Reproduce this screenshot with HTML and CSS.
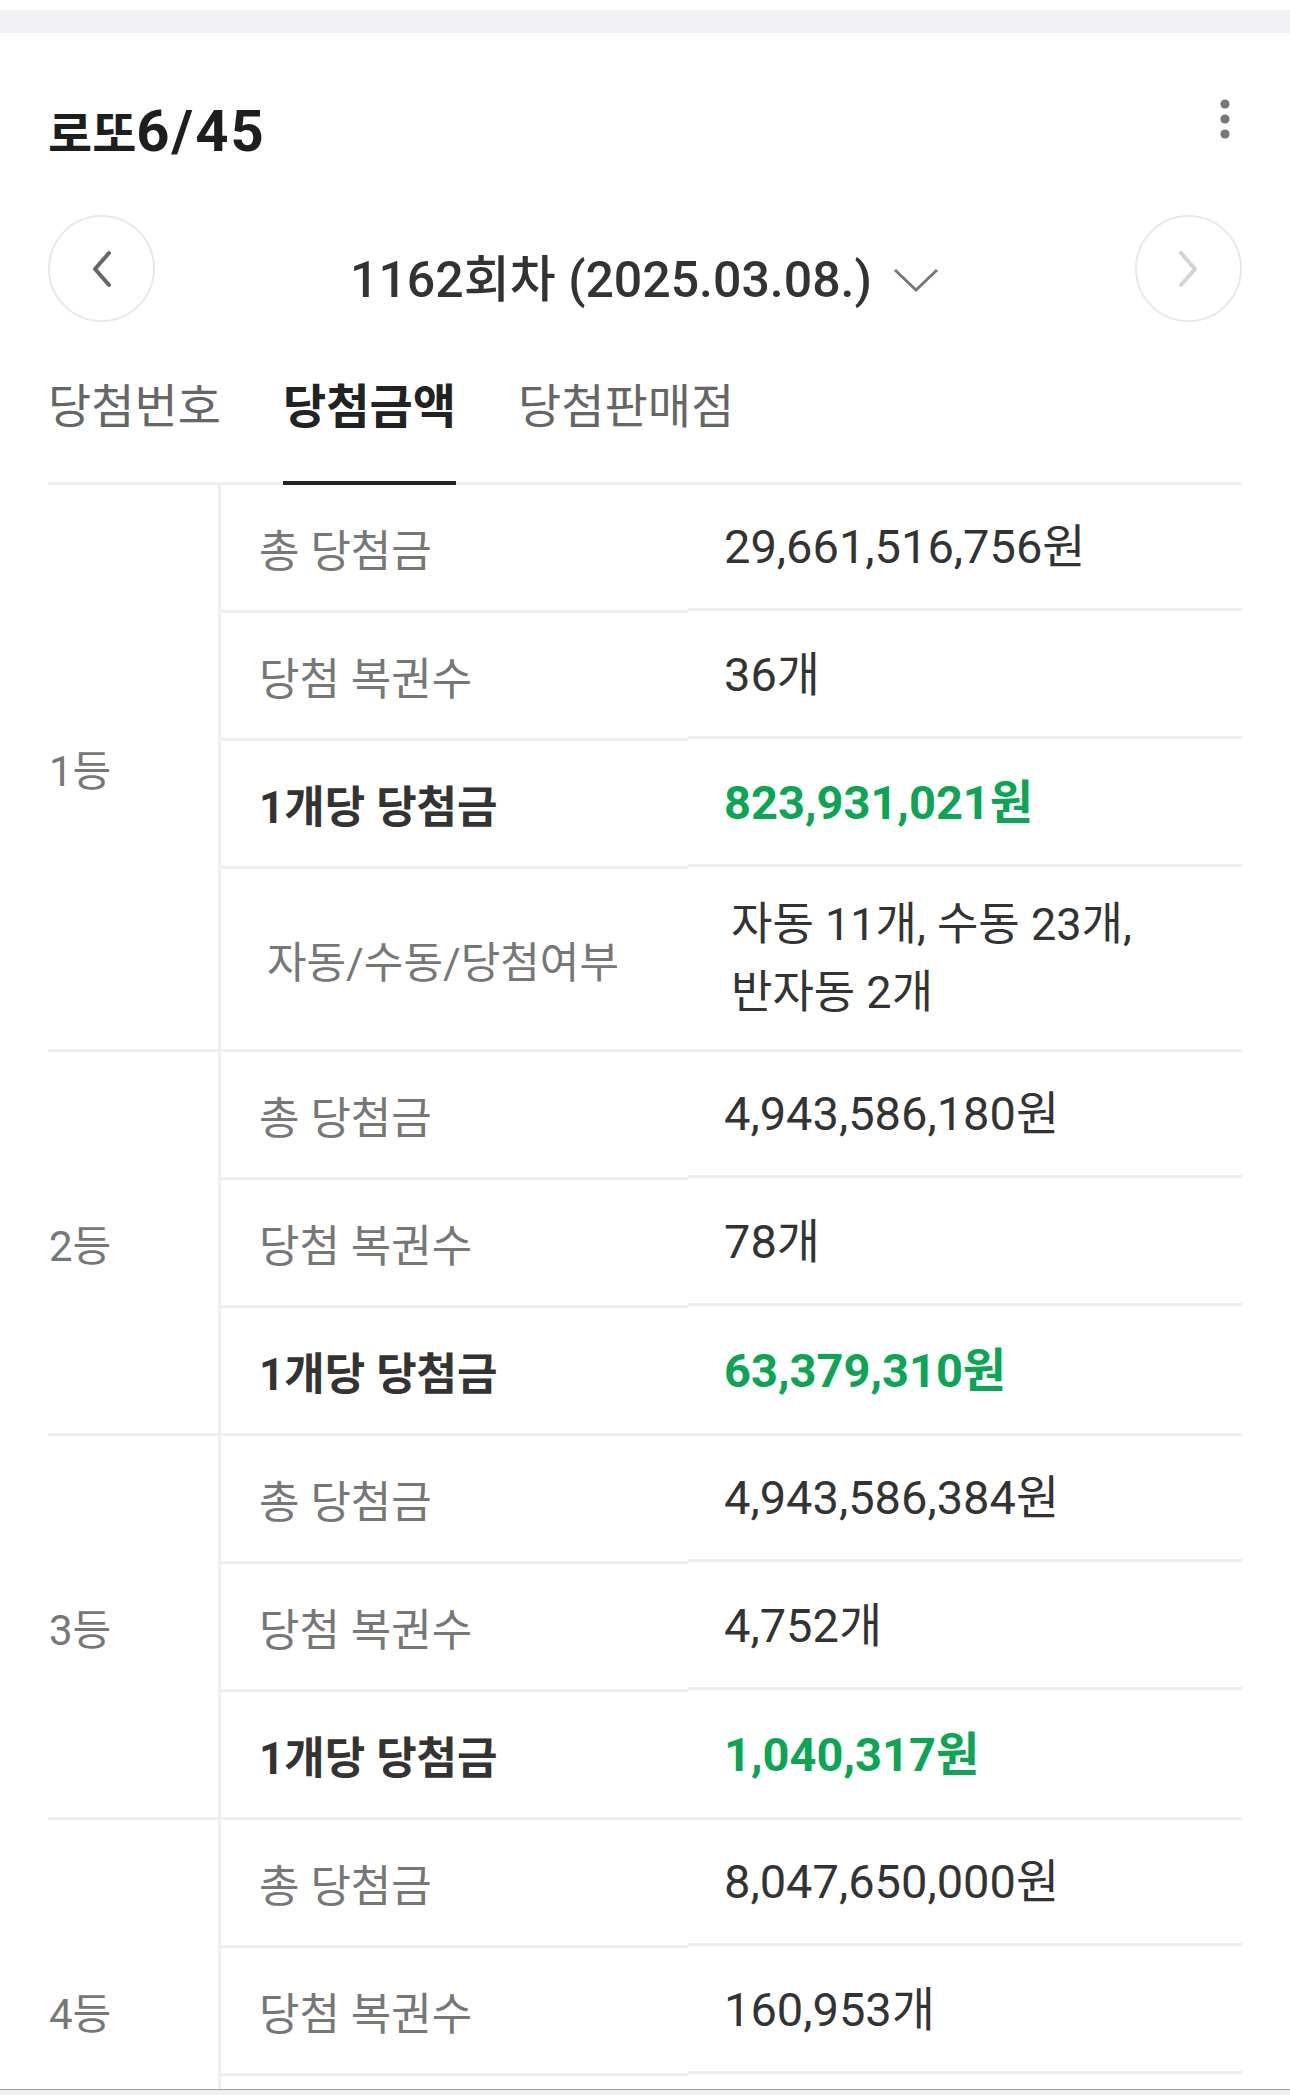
FILE: index.html
```html
<!DOCTYPE html>
<html lang="ko">
<head>
	<meta charset="UTF-8">
	<meta name="viewport" content="width=device-width, initial-scale=1.0">
	<title>로또6/45 당첨금액</title>
	<link rel="stylesheet" href="styles.css">
</head>
<body>
	<div class="top-gap"></div>

	<div class="card">
		<div class="card-head">
			<h1>로또<span class="game-no">6/45</span></h1>
			<button class="more" aria-label="더보기">
				<svg width="34" height="44" viewBox="0 0 34 44">
					<circle cx="17" cy="7" r="4.6" fill="#777"/>
					<circle cx="17" cy="22" r="4.6" fill="#777"/>
					<circle cx="17" cy="37" r="4.6" fill="#777"/>
				</svg>
			</button>
		</div>

		<div class="round-nav">
			<button class="round-btn" aria-label="이전 회차">
				<svg width="24" height="38" viewBox="0 0 24 38">
					<polyline points="19,3 5,19 19,35" fill="none" stroke="#666" stroke-width="4" stroke-linecap="round" stroke-linejoin="round"/>
				</svg>
			</button>
			<div class="draw-pick">
				<span class="draw-name">1162회차 (2025.03.08.)</span>
				<svg width="48" height="26" viewBox="0 0 48 26">
					<polyline points="3,3 24,23 45,3" fill="none" stroke="#777" stroke-width="3"/>
				</svg>
			</div>
			<button class="round-btn" aria-label="다음 회차">
				<svg width="24" height="38" viewBox="0 0 24 38">
					<polyline points="5,3 19,19 5,35" fill="none" stroke="#d4d4d4" stroke-width="4" stroke-linecap="round" stroke-linejoin="round"/>
				</svg>
			</button>
		</div>

		<div class="tabs">
			<div class="tab">당첨번호</div>
			<div class="tab on">당첨금액</div>
			<div class="tab">당첨판매점</div>
		</div>

		<div class="prize-table">
			<div class="rank-group">
				<div class="rank-name">1등</div>
				<div class="rank-rows">
					<div class="prize-row">
						<div class="prize-label">총 당첨금</div>
						<div class="prize-value">29,661,516,756원</div>
					</div>
					<div class="prize-row">
						<div class="prize-label">당첨 복권수</div>
						<div class="prize-value">36개</div>
					</div>
					<div class="prize-row">
						<div class="prize-label strong">1개당 당첨금</div>
						<div class="prize-value win">823,931,021원</div>
					</div>
					<div class="prize-row tall">
						<div class="prize-label">자동/수동/당첨여부</div>
						<div class="prize-value">자동 11개, 수동 23개,<br>반자동 2개</div>
					</div>
				</div>
			</div>

			<div class="rank-group">
				<div class="rank-name">2등</div>
				<div class="rank-rows">
					<div class="prize-row">
						<div class="prize-label">총 당첨금</div>
						<div class="prize-value">4,943,586,180원</div>
					</div>
					<div class="prize-row">
						<div class="prize-label">당첨 복권수</div>
						<div class="prize-value">78개</div>
					</div>
					<div class="prize-row">
						<div class="prize-label strong">1개당 당첨금</div>
						<div class="prize-value win">63,379,310원</div>
					</div>
				</div>
			</div>

			<div class="rank-group">
				<div class="rank-name">3등</div>
				<div class="rank-rows">
					<div class="prize-row">
						<div class="prize-label">총 당첨금</div>
						<div class="prize-value">4,943,586,384원</div>
					</div>
					<div class="prize-row">
						<div class="prize-label">당첨 복권수</div>
						<div class="prize-value">4,752개</div>
					</div>
					<div class="prize-row">
						<div class="prize-label strong">1개당 당첨금</div>
						<div class="prize-value win">1,040,317원</div>
					</div>
				</div>
			</div>

			<!-- 목록이 아래로 이어지는 그룹 -->
			<div class="rank-group open">
				<div class="rank-name">4등</div>
				<div class="rank-rows">
					<div class="prize-row">
						<div class="prize-label">총 당첨금</div>
						<div class="prize-value">8,047,650,000원</div>
					</div>
					<div class="prize-row">
						<div class="prize-label">당첨 복권수</div>
						<div class="prize-value">160,953개</div>
					</div>
				</div>
			</div>
		</div>
	</div>

	<div class="bottom-bar"></div>
</body>
</html>
```

FILE: styles.css
```css
html, body {
	height: 100%;
	overflow: hidden;
}
body {
	margin: 0;
	background: #fff;
	font-family: Roboto, "Noto Sans CJK KR", sans-serif;
	color: #333;
}
button {
	border: none;
	background: none;
	padding: 0;
	cursor: pointer;
	font: inherit;
}
.top-gap {
	margin-top: 10px;
	height: 23px;
	background: #f1f1f3;
}
.card {
	padding: 0 48px;
}

/* 제목 + 더보기 */
.card-head {
	display: flex;
	justify-content: space-between;
	align-items: flex-start;
	height: 58px;
	margin-top: 69px;
}
.card-head h1 {
	margin: 0;
	font-size: 48px;
	line-height: 58px;
	font-weight: bold;
	color: #1e1e1e;
}
.game-no {
	font-size: 58px;
	letter-spacing: 2px;
}
.more {
	display: flex;
	margin-top: -5px;
}

/* 회차 선택 */
.round-nav {
	display: flex;
	justify-content: space-between;
	align-items: center;
	margin-top: 55px;
}
.round-btn {
	width: 107px;
	height: 107px;
	box-sizing: border-box;
	border: 2px solid #e8e8e8;
	border-radius: 50%;
	display: flex;
	align-items: center;
	justify-content: center;
}
.draw-pick {
	display: flex;
	align-items: center;
	gap: 20px;
	padding-top: 22px;
}
.draw-name {
	font-size: 50px;
	line-height: 60px;
	font-weight: 500;
	color: #333;
}

/* 탭 */
.tabs {
	display: flex;
	gap: 62px;
	margin-top: 59px;
	border-bottom: 3px solid #efefef;
}
.tab {
	font-size: 47px;
	line-height: 52px;
	padding-bottom: 48px;
	color: #666;
}
.tab.on {
	color: #222;
	font-weight: bold;
	border-bottom: 4px solid #222;
	margin-bottom: -3px;
}

/* 당첨금 표 */
.rank-group {
	display: flex;
	border-bottom: 3px solid #efefef;
}
.rank-group.open {
	border-bottom: none;
}
.rank-name {
	width: 169px;
	padding-left: 1px;
	display: flex;
	align-items: center;
	border-right: 3px solid #efefef;
	font-size: 42px;
	color: #777;
}
.rank-rows {
	flex: 1;
	display: flex;
	flex-direction: column;
}
/* 다음 행(1개당 당첨금)이 화면 아래에 있음 */
.open .rank-rows {
	padding-bottom: 125px;
}
.prize-row {
	display: flex;
	min-height: 128px;
}
.prize-row:last-child {
	min-height: 125px;
}
.prize-row.tall {
	min-height: 180px;
}
.prize-label {
	width: 467px;
	box-sizing: border-box;
	padding-left: 38px;
	display: flex;
	align-items: center;
	font-size: 44px;
	color: #777;
}
.prize-value {
	flex: 1;
	padding-left: 36px;
	display: flex;
	align-items: center;
	font-size: 47px;
	line-height: 68px;
	color: #333;
}
.prize-row:not(:last-child) .prize-label,
.open .prize-row .prize-label {
	border-bottom: 3px solid #efefef;
}
.prize-row:not(:last-child) .prize-value,
.open .prize-row .prize-value {
	border-bottom: 3px solid #efefef;
	margin-bottom: 2px;
}
.open .prize-row {
	min-height: 128px;
}
.prize-label.strong {
	color: #333;
	font-weight: bold;
}
.prize-value.win {
	color: #0ca553;
	font-weight: bold;
}
.tall .prize-label {
	padding-left: 46px;
	font-size: 43px;
}
.tall .prize-value {
	padding-left: 43px;
	font-size: 45px;
}

.bottom-bar {
	position: fixed;
	left: 0;
	right: 0;
	bottom: 0;
	height: 5px;
	border-top: 1px solid #a0a0a0;
	background: #f0f0f2;
}
```
